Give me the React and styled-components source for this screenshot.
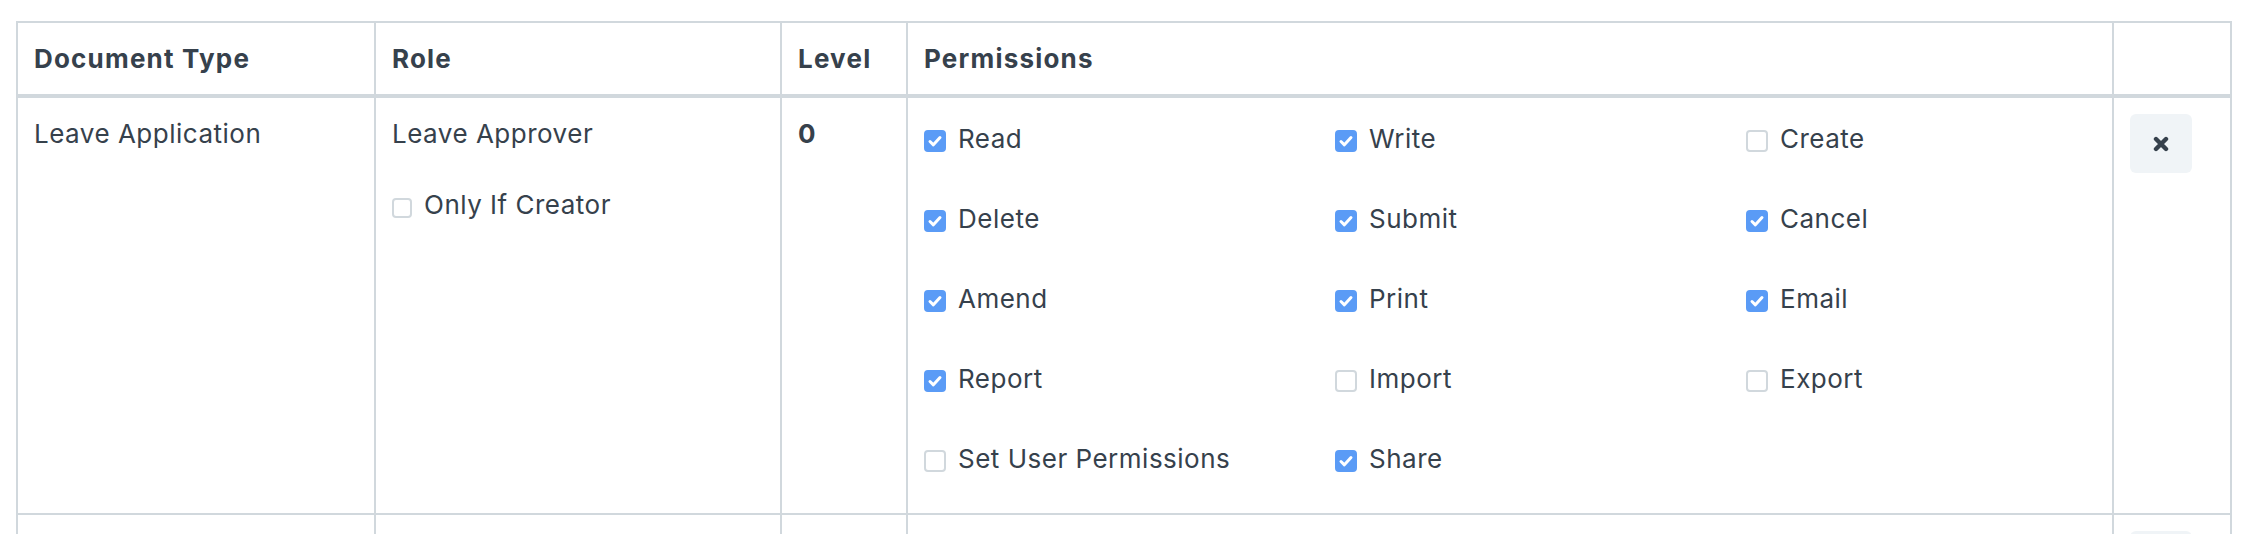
import styled, { createGlobalStyle } from "styled-components";

const GlobalStyle = createGlobalStyle`
  html, body {
    margin: 0;
    padding: 0;
    background: #ffffff;
    overflow: hidden;
  }
  body {
    font-family: Inter, "Liberation Sans", sans-serif;
    color: #36414c;
  }
`;

const Page = styled.div`
  padding: 21px 18px 0 16px;
`;

const Table = styled.div`
  width: 2216px;
  box-sizing: border-box;
  border-top: 2px solid #d1d8dd;
  border-left: 2px solid #d1d8dd;
`;

const Row = styled.div`
  display: grid;
  grid-template-columns: 358px 406px 126px 1206px 118px;
`;

const Cell = styled.div`
  box-sizing: border-box;
  padding: 16px;
  border-right: 2px solid #d1d8dd;
  border-bottom: ${(p) => (p.$head ? "4px" : "2px")} solid #d1d8dd;
  font-size: 26px;
  line-height: 39px;
  font-weight: ${(p) => (p.$bold ? 700 : 400)};
  letter-spacing: ${(p) => (p.$head ? "1.2px" : "0.5px")};
  color: #36414c;
  white-space: nowrap;
  min-width: 0;
`;

const PermGrid = styled.div`
  display: grid;
  grid-template-columns: repeat(3, 411px);
  row-gap: 41px;
  padding: 5px 0 19px;
`;

const CheckLabel = styled.label`
  display: flex;
  align-items: flex-start;
  gap: 12px;
  height: 39px;
  margin-top: ${(p) => p.$offset || 0}px;
  cursor: pointer;
`;

const Box = styled.span`
  flex: none;
  display: flex;
  align-items: center;
  justify-content: center;
  box-sizing: border-box;
  width: ${(p) => p.$size}px;
  height: ${(p) => p.$size}px;
  margin-top: ${(p) => 33 - p.$size}px;
  border-radius: 4px;
  background: ${(p) => (p.$checked ? "#5a9bf6" : "#ffffff")};
  border: 2px solid ${(p) => (p.$checked ? "#5a9bf6" : "#d1d8dd")};
`;

const RemoveButton = styled.button`
  display: flex;
  align-items: center;
  justify-content: center;
  width: 62px;
  height: 59px;
  padding: 0;
  border: none;
  border-radius: 6px;
  background: #f0f4f7;
  color: #36414c;
  cursor: pointer;
`;

const permissions = [
  { label: "Read", checked: true },
  { label: "Write", checked: true },
  { label: "Create", checked: false },
  { label: "Delete", checked: true },
  { label: "Submit", checked: true },
  { label: "Cancel", checked: true },
  { label: "Amend", checked: true },
  { label: "Print", checked: true },
  { label: "Email", checked: true },
  { label: "Report", checked: true },
  { label: "Import", checked: false },
  { label: "Export", checked: false },
  { label: "Set User Permissions", checked: false },
  { label: "Share", checked: true },
];

const rules = [
  { doctype: "Leave Application", role: "Leave Approver", level: 0, perms: permissions },
  { doctype: "Leave Application", role: "Employee", level: 0, perms: permissions },
];

const Checkbox = ({ label, checked, size = 22, offset }) => (
  <CheckLabel $offset={offset}>
    <Box $size={size} $checked={checked}>
      {checked && (
        <svg width="16" height="16" viewBox="0 0 16 16">
          <polyline
            points="3,8.5 6.4,11.8 13,4.6"
            fill="none"
            stroke="#ffffff"
            strokeWidth="3"
            strokeLinecap="round"
            strokeLinejoin="round"
          />
        </svg>
      )}
    </Box>
    <span>{label}</span>
  </CheckLabel>
);

const XIcon = () => (
  <svg width="16" height="16" viewBox="0 0 16 16">
    <path
      d="M3 3 L13 13 M13 3 L3 13"
      stroke="#36414c"
      strokeWidth="4.4"
      strokeLinecap="round"
    />
  </svg>
);

const App = () => {
  return (
    <Page>
      <GlobalStyle />
      <Table>
        <Row>
          <Cell $head $bold>Document Type</Cell>
          <Cell $head $bold>Role</Cell>
          <Cell $head $bold>Level</Cell>
          <Cell $head $bold>Permissions</Cell>
          <Cell $head></Cell>
        </Row>
        {rules.map((rule) => (
          <Row key={rule.role}>
            <Cell>{rule.doctype}</Cell>
            <Cell>
              <div>{rule.role}</div>
              <Checkbox label="Only If Creator" checked={false} size={20} offset={32} />
            </Cell>
            <Cell $bold>{rule.level}</Cell>
            <Cell>
              <PermGrid>
                {rule.perms.map((p) => (
                  <Checkbox key={p.label} label={p.label} checked={p.checked} />
                ))}
              </PermGrid>
            </Cell>
            <Cell>
              <RemoveButton title="Remove">
                <XIcon />
              </RemoveButton>
            </Cell>
          </Row>
        ))}
      </Table>
    </Page>
  );
};

export default App;
